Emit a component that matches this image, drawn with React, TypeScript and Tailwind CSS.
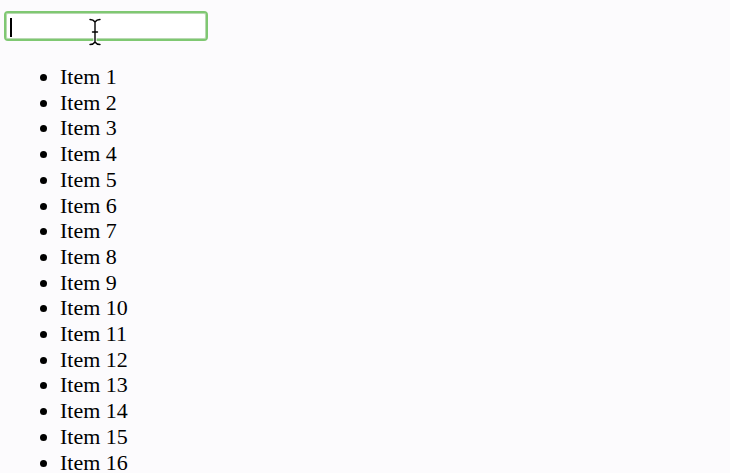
import React from "react";

export default function App() {
  const items = Array.from({ length: 16 }, (_, i) => `Item ${i + 1}`);
  return (
    <div
      className="min-h-[473px] w-full bg-[#fcfbfd] text-black overflow-hidden"
      style={{ fontFamily: '"Liberation Serif", "Times New Roman", serif' }}
    >
      <div className="pt-[11px] pl-[4px]">
        <div className="relative w-[204px] h-[30px] rounded-[4px] border-2 border-[#7fc872] bg-white shadow-[inset_0_0_0_1px_#b9d9b2]">
          <input
            aria-label="search"
            className="w-full h-full bg-transparent outline-none px-1 text-[18px]"
          />
          <span className="absolute left-[4px] top-[5px] w-[2px] h-[19px] bg-black" />
          <svg
            className="absolute left-[82px] top-[5px]"
            width="14"
            height="28"
            viewBox="0 0 14 28"
            fill="none"
          >
            <path
              d="M2 1.5 C5 1.5 6 2.5 7 4 C8 2.5 9 1.5 12 1.5 M7 4 V24 M2 26.5 C5 26.5 6 25.5 7 24 C8 25.5 9 26.5 12 26.5 M4.5 14 H9.5"
              stroke="white"
              strokeWidth="3.2"
              strokeLinecap="round"
            />
            <path
              d="M2 1.5 C5 1.5 6 2.5 7 4 C8 2.5 9 1.5 12 1.5 M7 4 V24 M2 26.5 C5 26.5 6 25.5 7 24 C8 25.5 9 26.5 12 26.5 M4.5 14 H9.5"
              stroke="black"
              strokeWidth="1.4"
              strokeLinecap="round"
            />
          </svg>
        </div>
      </div>
      <ul className="list-disc mt-[23px] pl-[60px] text-[22px] leading-[25.7px]">
        {items.map((t) => (
          <li key={t}>{t}</li>
        ))}
      </ul>
    </div>
  );
}
